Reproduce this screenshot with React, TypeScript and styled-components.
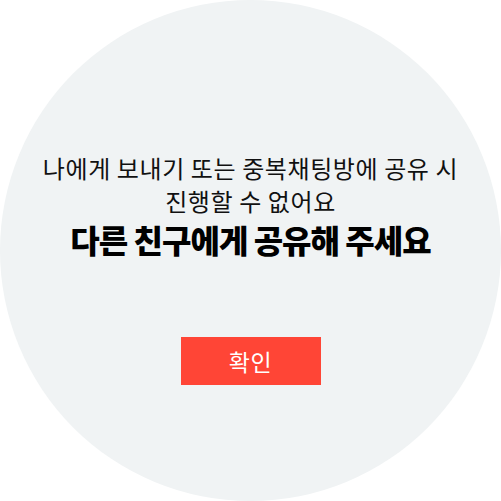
import React from "react";
import styled, { createGlobalStyle } from "styled-components";

const Global = createGlobalStyle`
  html, body { margin: 0; padding: 0; background: #ffffff; }
  body { font-family: "Noto Sans CJK KR", "Noto Sans", sans-serif; }
`;

const Circle = styled.div`
  width: 501px;
  height: 501px;
  border-radius: 50%;
  background: #f0f3f4;
  display: flex;
  flex-direction: column;
  align-items: center;
  box-sizing: border-box;
  padding-top: 151px;
`;

const Message = styled.p`
  margin: 0;
  font-size: 24px;
  line-height: 33px;
  letter-spacing: 0.6px;
  color: #111111;
  text-align: center;
  font-weight: 400;
`;

const Emphasis = styled.p`
  margin: 2px 0 0;
  font-size: 32px;
  line-height: 40px;
  letter-spacing: -1px;
  font-weight: 900;
  color: #000000;
  text-align: center;
`;

const ConfirmButton = styled.button`
  margin-top: 78px;
  width: 140px;
  height: 48px;
  border: none;
  border-radius: 0;
  background: #ff4536;
  color: #ffffff;
  font-family: "Noto Sans CJK KR", "Noto Sans", sans-serif;
  font-size: 23px;
  font-weight: 400;
  letter-spacing: 0.5px;
  padding: 0;
  display: flex;
  align-items: center;
  justify-content: center;
  cursor: pointer;
`;

export default function App() {
  return (
    <>
      <Global />
      <Circle>
        <Message>
          나에게 보내기 또는 중복채팅방에 공유 시<br />
          진행할 수 없어요
        </Message>
        <Emphasis>다른 친구에게 공유해 주세요</Emphasis>
        <ConfirmButton>확인</ConfirmButton>
      </Circle>
    </>
  );
}
